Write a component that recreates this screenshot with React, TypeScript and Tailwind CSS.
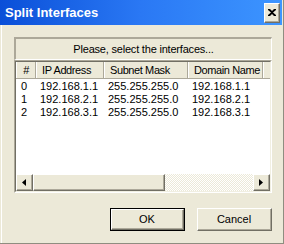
import React from "react";

const rows = [
  { n: "0", ip: "192.168.1.1", mask: "255.255.255.0", dom: "192.168.1.1" },
  { n: "1", ip: "192.168.2.1", mask: "255.255.255.0", dom: "192.168.2.1" },
  { n: "2", ip: "192.168.3.1", mask: "255.255.255.0", dom: "192.168.3.1" },
];

function Raised({ className, children }: { className?: string; children?: React.ReactNode }) {
  return (
    <div className={`border-t border-l border-white border-r border-b border-r-[#716f64] border-b-[#716f64] bg-[#ece9d8] ${className ?? ""}`}>
      <div className="w-full h-full border-r border-b border-[#aca899] flex items-center justify-center">
        {children}
      </div>
    </div>
  );
}

function HeaderCell({ w, children, center }: { w: string; children?: React.ReactNode; center?: boolean }) {
  return (
    <div className={`${w} h-full shrink-0 border-l border-white border-r border-r-[#aca899] flex items-center ${center ? "justify-center" : "pl-[5px]"} whitespace-nowrap overflow-hidden tracking-[-0.4px]`}>
      {children}
    </div>
  );
}

export default function App() {
  return (
    <div
      className="w-[284px] h-[244px] bg-[#ece9d8] border-r border-b border-[#8f8d80] flex flex-col text-[11px] text-black"
      style={{ fontFamily: '"Liberation Sans", Arial, sans-serif' }}
    >
      {/* title bar */}
      <div className="h-[25px] mr-[1px] shrink-0 flex items-center justify-between pl-[5px] pr-[2px] bg-gradient-to-r from-[#0a4fd8] via-[#2a78f4] to-[#3d95ff]">
        <span className="text-white font-bold text-[13px] leading-none">Split Interfaces</span>
        <Raised className="w-[16px] h-[20px]">
          <svg width="8" height="7" viewBox="0 0 8 7">
            <path d="M0 0h2l2 2 2-2h2v1L5 3.5 8 6v1H6L4 5 2 7H0V6l3-2.5L0 1z" fill="#000" />
          </svg>
        </Raised>
      </div>

      {/* body */}
      <div className="flex-1 pl-[1px] flex">
        <div className="flex-1 border-l border-white pl-[12px] pt-[12px] flex flex-col">
          {/* panel */}
          <div className="w-[258px] flex flex-col">
            <div className="h-[23px] border-t-2 border-l-2 border-[#aca899] border-b border-r border-b-white border-r-white flex items-center justify-center tracking-[-0.2px]">
              Please, select the interfaces...
            </div>
            {/* list view */}
            <div className="h-[133px] border-t border-l border-[#aca899] border-r border-b border-r-white border-b-white">
              <div className="w-full h-full border-t border-l border-[#716f64] border-r border-b border-r-[#f1efe2] border-b-[#f1efe2] bg-white flex flex-col">
                {/* header */}
                <div className="h-[17px] shrink-0 flex bg-[#ece9d8] border-b border-[#aca899]">
                  <HeaderCell w="w-[20px]" center>#</HeaderCell>
                  <HeaderCell w="w-[68px]">IP Address</HeaderCell>
                  <HeaderCell w="w-[84px]">Subnet Mask</HeaderCell>
                  <HeaderCell w="w-[75px]">Domain Name</HeaderCell>
                  <div className="flex-1 h-full border-l border-white" />
                </div>
                {/* rows */}
                <div className="flex-1 flex flex-col pt-[1px]">
                  {rows.map((r) => (
                    <div key={r.n} className="h-[13px] flex items-center whitespace-nowrap">
                      <div className="w-[20px] pl-[5px] shrink-0">{r.n}</div>
                      <div className="w-[68px] pl-[4px] shrink-0">{r.ip}</div>
                      <div className="w-[84px] pl-[4px] shrink-0">{r.mask}</div>
                      <div className="w-[75px] pl-[4px] shrink-0">{r.dom}</div>
                    </div>
                  ))}
                </div>
                {/* horizontal scrollbar */}
                <div className="h-[17px] shrink-0 flex bg-[repeating-conic-gradient(#ece9d8_0%_25%,#ffffff_0%_50%)] bg-[length:2px_2px]">
                  <Raised className="w-[17px] h-full">
                    <svg width="4" height="7" viewBox="0 0 4 7">
                      <path d="M4 0v7L0 3.5z" fill="#000" />
                    </svg>
                  </Raised>
                  <Raised className="w-[132px] h-full" />
                  <div className="flex-1" />
                  <Raised className="w-[17px] h-full">
                    <svg width="4" height="7" viewBox="0 0 4 7">
                      <path d="M0 0v7l4-3.5z" fill="#000" />
                    </svg>
                  </Raised>
                </div>
              </div>
            </div>
          </div>

          {/* buttons */}
          <div className="w-[258px] flex justify-end gap-[12px] mt-[15px]">
            <div className="w-[75px] h-[23px] border border-black">
              <Raised className="w-full h-full">OK</Raised>
            </div>
            <Raised className="w-[75px] h-[23px]">Cancel</Raised>
          </div>
        </div>
      </div>
    </div>
  );
}
